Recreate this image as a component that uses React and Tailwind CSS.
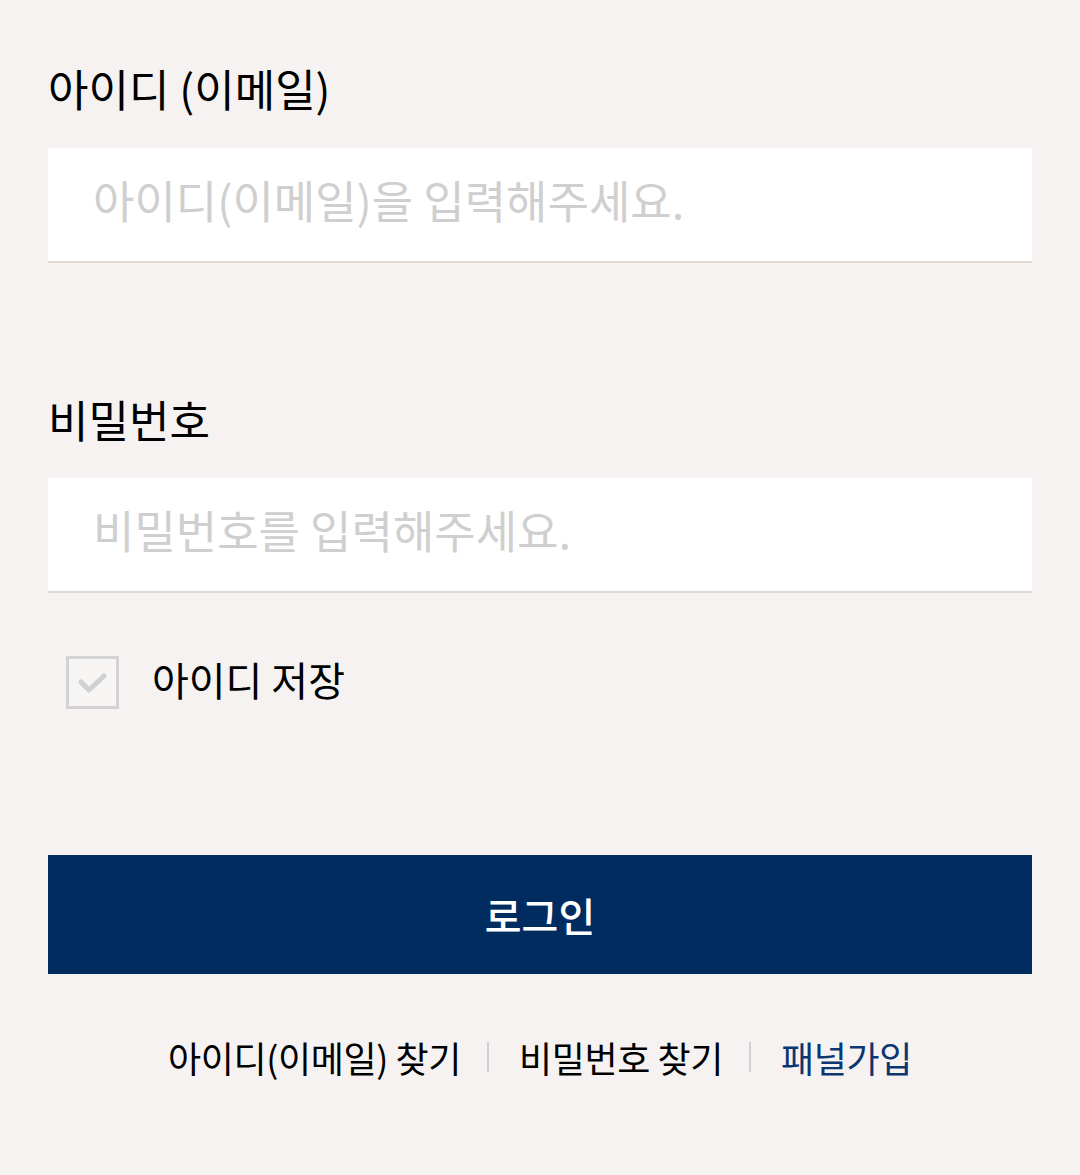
export default function App() {
  const font = { fontFamily: '"Noto Sans CJK KR", "Noto Sans", sans-serif' };
  return (
    <div className="min-h-[1175px] bg-[#f5f2f1] px-[48px] pt-[55px]" style={font}>
      {/* ID */}
      <label className="block h-[66px] leading-[66px] text-[44px] text-black">아이디 (이메일)</label>
      <input
        type="text"
        placeholder="아이디(이메일)을 입력해주세요."
        className="mt-[27px] block w-full h-[115px] bg-white border-b-2 border-[#dfd9d3] pl-[45px] pr-[45px] pb-[10px] text-[45px] text-black placeholder-[#cfcfcf] outline-none"
      />

      {/* Password */}
      <label className="mt-[123px] block h-[66px] leading-[66px] text-[44px] text-black">비밀번호</label>
      <input
        type="password"
        placeholder="비밀번호를 입력해주세요."
        className="mt-[26px] block w-full h-[115px] bg-white border-b-2 border-[#dfd9d3] pl-[45px] pr-[45px] pb-[10px] text-[45px] text-black placeholder-[#cfcfcf] outline-none"
      />

      {/* Remember */}
      <div className="mt-[63px] flex items-center gap-[33px] pl-[18px]">
        <span className="flex items-center justify-center w-[53px] h-[53px] border-[3px] border-[#d3d3d3] bg-[#f7f5f4]">
          <svg width="32" height="24" viewBox="0 0 32 24" fill="none">
            <path d="M4 11 L12 19 L27 5" stroke="#d0d0d0" strokeWidth="5" strokeLinecap="round" strokeLinejoin="round" />
          </svg>
        </span>
        <span className="text-[40px] leading-[53px] text-black -translate-y-[3px]">아이디 저장</span>
      </div>

      {/* Login */}
      <button className="mt-[146px] w-full h-[119px] bg-[#002c5f] text-white text-[40px] font-medium">로그인</button>

      {/* Links */}
      <div className="mt-[58px] flex items-center justify-center h-[50px] text-[36px] tracking-[-0.4px] text-black">
        <a className="whitespace-nowrap">아이디(이메일) 찾기</a>
        <span className="ml-[26px] mr-[30px] w-[2px] h-[30px] bg-[#cfcfcf]" />
        <a className="whitespace-nowrap">비밀번호 찾기</a>
        <span className="ml-[26px] mr-[30px] w-[2px] h-[30px] bg-[#cfcfcf]" />
        <a className="whitespace-nowrap text-[#0b3670]">패널가입</a>
      </div>
    </div>
  );
}
